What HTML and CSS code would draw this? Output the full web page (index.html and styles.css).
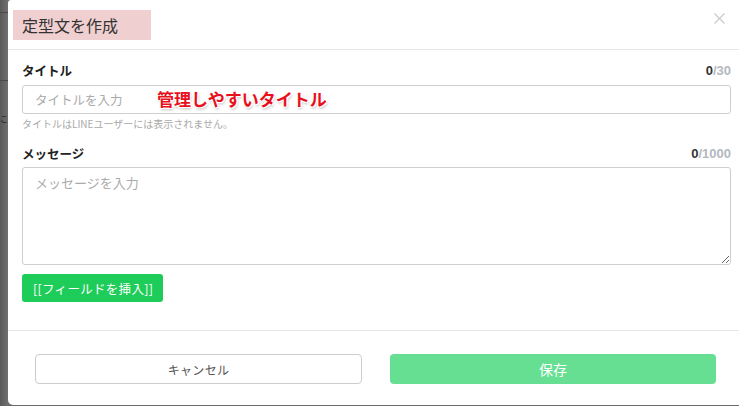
FILE: index.html
```html
<!DOCTYPE html>
<html lang="ja">
<head>
<meta charset="utf-8">
<link rel="stylesheet" href="styles.css">
</head>
<body>
<div class="stage">
  <div class="backdrop">
    <div class="bd-line l1"></div>
    <div class="bd-line l2"></div>
    <div class="bd-char">こ</div>
  </div>
  <div class="modal">
    <div class="modal-header">
      <h1 class="title">定型文を作成</h1>
      <svg class="close" width="11" height="11" viewBox="0 0 11 11"><path d="M0.5 0.5L10.5 10.5M10.5 0.5L0.5 10.5" stroke="#c8c8c8" stroke-width="1.1" fill="none"/></svg>
    </div>
    <div class="modal-body">
      <div class="label-row">
        <span class="label">タイトル</span>
        <span class="count"><b>0</b>/30</span>
      </div>
      <div class="input-wrap">
        <input class="input" type="text" placeholder="タイトルを入力">
        <span class="note">管理しやすいタイトル</span>
      </div>
      <p class="help">タイトルはLINEユーザーには表示されません。</p>
      <div class="label-row second">
        <span class="label">メッセージ</span>
        <span class="count"><b>0</b>/1000</span>
      </div>
      <textarea class="textarea" placeholder="メッセージを入力"></textarea>
      <button class="insert">[[フィールドを挿入]]</button>
    </div>
    <div class="modal-footer">
      <button class="btn cancel">キャンセル</button>
      <button class="btn save">保存</button>
    </div>
  </div>
</div>
</body>
</html>
```
FILE: styles.css
```css
* { box-sizing: border-box; }
html, body { margin: 0; padding: 0; }
body {
  width: 739px;
  height: 406px;
  overflow: hidden;
  background: #6a6a6a;
  font-family: "Noto Sans CJK JP", "Liberation Sans", sans-serif;
}
.stage {
  display: flex;
  height: 406px;
}
.backdrop {
  position: relative;
  width: 8px;
  flex: none;
  background: linear-gradient(to right, #5a5a5a, #707070);
}
.bd-line {
  position: absolute;
  left: 0;
  width: 8px;
  height: 1px;
  background: #4a4a4a;
}
.l1 { top: 12px; }
.l2 { top: 80px; }
.bd-char {
  position: absolute;
  left: 0;
  top: 114px;
  font-size: 8px;
  line-height: 10px;
  color: #222;
}
.modal {
  flex: none;
  width: 737px;
  height: 405px;
  background: #fff;
  border-radius: 3px 0 0 5px;
  display: flex;
  flex-direction: column;
}
.modal-header {
  height: 50px;
  border-bottom: 1px solid #e6e6e6;
  display: flex;
  align-items: center;
  justify-content: space-between;
  padding: 0 20px 0 5px;
}
.title {
  margin: 0;
  height: 30px;
  line-height: 30px;
  padding: 0 33px 0 9px;
  background: #efcfd0;
  font-size: 16px;
  font-weight: 400;
  color: #333;
}
.close { margin-top: -12px; }
.modal-body {
  padding: 10px 14px 28px 14px;
  border-bottom: 1px solid #e6e6e6;
}
.label-row {
  display: flex;
  justify-content: space-between;
  align-items: center;
  height: 20px;
}
.label-row.second { margin-top: 12px; }
.label {
  font-size: 12.5px;
  font-weight: 700;
  color: #222;
}
.count {
  font-family: "Liberation Sans", sans-serif;
  font-size: 13px;
  font-weight: 700;
  color: #b3b8c0;
}
.count b { color: #333; }
.input-wrap {
  position: relative;
  margin-top: 5px;
}
.input {
  display: block;
  width: 100%;
  height: 29px;
  border: 1px solid #cfcfcf;
  border-radius: 3px;
  padding: 0 12px;
  font-family: "Noto Sans CJK JP", sans-serif;
  font-size: 12.5px;
  outline: none;
}
.input::placeholder, .textarea::placeholder { color: #aaa; }
.note {
  position: absolute;
  left: 135px;
  top: 1px;
  font-size: 17px;
  font-weight: 700;
  color: #e8101c;
  text-shadow: -1px -1px 0 #fff, 1px -1px 0 #fff, -1px 1px 0 #fff, 1px 1px 0 #fff, 0 0 4px #fff, 1px 2px 3px rgba(0,0,0,0.35);
}
.help {
  margin: 3px 0 0 0;
  font-size: 10px;
  line-height: 14px;
  color: #a9a9a9;
}
.textarea {
  display: block;
  width: 100%;
  height: 98px;
  margin-top: 4px;
  border: 1px solid #cfcfcf;
  border-radius: 3px;
  padding: 5px 12px;
  font-family: "Noto Sans CJK JP", sans-serif;
  font-size: 13px;
  resize: vertical;
  outline: none;
}
.insert {
  display: block;
  margin-top: 9px;
  height: 28px;
  padding: 0 10px 0 11px;
  background: #1ecc5a;
  border: none;
  border-radius: 3px;
  color: #fff;
  font-family: "Noto Sans CJK JP", sans-serif;
  font-size: 12.5px;
  letter-spacing: 0.3px;
}
.modal-footer {
  display: grid;
  grid-template-columns: 327px 326px;
  column-gap: 28px;
  padding: 23px 0 0 27px;
}
.btn {
  height: 30px;
  border-radius: 4px;
  font-family: "Noto Sans CJK JP", sans-serif;
}
.cancel {
  background: #fff;
  border: 1px solid #cccccc;
  color: #555;
  font-size: 12px;
  letter-spacing: 0.3px;
}
.save {
  background: #66df93;
  border: none;
  color: #fff;
  font-size: 14px;
}
```
